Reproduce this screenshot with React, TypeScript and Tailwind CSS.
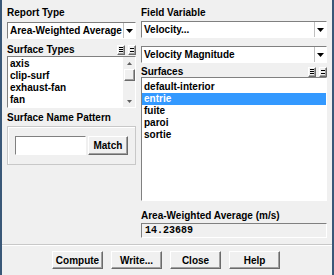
import React from 'react';

const sunken = 'border border-t-[#808080] border-l-[#808080] border-b-white border-r-white bg-white';
const raised =
  'border border-t-white border-l-white border-b-[#6b6b6b] border-r-[#6b6b6b] bg-[#f0f0f0] shadow-[inset_-1px_-1px_0_#a0a0a0]';

const Label: React.FC<{ children: React.ReactNode; className?: string }> = ({ children, className = '' }) => (
  <div className={`h-[14px] leading-[14px] font-bold text-[10px] text-black ${className}`}>{children}</div>
);

const Dropdown: React.FC<{ value: string }> = ({ value }) => (
  <div className={`flex h-[17px] items-stretch ${sunken}`}>
    <div className="flex-1 overflow-hidden whitespace-nowrap pl-[2px] leading-[15px] font-bold text-[10px]">{value}</div>
    <div className="flex w-[12px] items-center justify-center border-l border-[#c0c0c0] bg-white">
      <svg width="7" height="4" viewBox="0 0 7 4">
        <path d="M0 0h7L3.5 4z" fill="#000" />
      </svg>
    </div>
  </div>
);

const ListButtons: React.FC = () => (
  <div className="flex gap-[3px]">
    <div className={`flex h-[10px] w-[8px] flex-col justify-center gap-[1px] px-[1px] ${raised}`}>
      <div className="h-px bg-black" />
      <div className="h-px bg-black" />
      <div className="h-px bg-black" />
    </div>
    <div className={`flex h-[10px] w-[8px] flex-col justify-center gap-[2px] px-[1px] ${raised}`}>
      <div className="h-px bg-black" />
      <div className="h-px bg-black" />
    </div>
  </div>
);

const Item: React.FC<{ children: React.ReactNode; selected?: boolean }> = ({ children, selected }) => (
  <div
    className={`h-[12px] leading-[12px] pl-[2px] font-bold text-[10px] whitespace-nowrap ${
      selected ? 'bg-[#3399ff] text-white' : 'text-black'
    }`}
  >
    {children}
  </div>
);

const Button: React.FC<{ children: React.ReactNode; className?: string }> = ({ children, className = '' }) => (
  <div className={`flex items-center justify-center font-bold text-[10px] text-black ${raised} ${className}`}>
    {children}
  </div>
);

export default function App() {
  return (
    <div
      className="flex h-[275px] w-[334px] flex-col border-x-2 border-[#3a5878] bg-[#f0f0f0]"
      style={{ fontFamily: '"Liberation Sans", Arial, sans-serif' }}
    >
      <div className="flex gap-[5px] px-[5px] pt-[6px]">
        {/* left column */}
        <div className="flex w-[129px] flex-col">
          <Label>Report Type</Label>
          <div className="mt-[2px]">
            <Dropdown value="Area-Weighted Average" />
          </div>
          <div className="mt-[5px] flex h-[11px] items-center justify-between">
            <Label>Surface Types</Label>
            <ListButtons />
          </div>
          <div className={`mt-[1px] flex h-[52px] ${sunken}`}>
            <div className="flex-1 pt-[1px]">
              <Item>axis</Item>
              <Item>clip-surf</Item>
              <Item>exhaust-fan</Item>
              <Item>fan</Item>
            </div>
            <div className="flex w-[12px] flex-col items-center bg-[#f0f0f0]">
              <div className="flex h-[12px] items-center">
                <svg width="5" height="3" viewBox="0 0 5 3">
                  <path d="M0 3h5L2.5 0z" fill="#606060" />
                </svg>
              </div>
              <div className={`h-[12px] w-[11px] ${raised}`} />
              <div className="flex-1" />
              <div className="flex h-[12px] items-center">
                <svg width="5" height="3" viewBox="0 0 5 3">
                  <path d="M0 0h5L2.5 3z" fill="#606060" />
                </svg>
              </div>
            </div>
          </div>
          <Label className="mt-[3px]">Surface Name Pattern</Label>
          <div className="mt-[1px] flex h-[39px] items-center gap-[2px] border border-[#c8c8c8] px-[7px] shadow-[inset_1px_1px_0_white]">
            <div className={`h-[19px] w-[72px] ${sunken}`} />
            <Button className="h-[19px] w-[41px]">Match</Button>
          </div>
        </div>

        {/* right column */}
        <div className="flex w-[186px] flex-col">
          <Label>Field Variable</Label>
          <div className="mt-[1px]">
            <Dropdown value="Velocity..." />
          </div>
          <div className="mt-[8px]">
            <Dropdown value="Velocity Magnitude" />
          </div>
          <div className="mt-[3px] flex h-[11px] items-center justify-between">
            <Label>Surfaces</Label>
            <ListButtons />
          </div>
          <div className={`h-[124px] pt-[3px] ${sunken}`}>
            <Item>default-interior</Item>
            <Item selected>entrie</Item>
            <Item>fuite</Item>
            <Item>paroi</Item>
            <Item>sortie</Item>
          </div>
          <Label className="mt-[8px]">Area-Weighted Average (m/s)</Label>
          <div
            className="h-[15px] border border-t-[#808080] border-l-[#808080] border-b-white border-r-white bg-[#f0f0f0] pl-[3px] leading-[13px] font-bold text-[10px]"
            style={{ fontFamily: '"Liberation Mono", monospace' }}
          >
            14.23689
          </div>
        </div>
      </div>

      <div className="mt-[6px] h-[2px] border-t border-[#c8c8c8] bg-white" />

      <div className="mt-[5px] flex gap-[8px] pl-[50px]">
        <Button className="h-[18px] w-[51px]">Compute</Button>
        <Button className="h-[18px] w-[51px]">Write...</Button>
        <Button className="h-[18px] w-[51px]">Close</Button>
        <Button className="h-[18px] w-[51px]">Help</Button>
      </div>
    </div>
  );
}
